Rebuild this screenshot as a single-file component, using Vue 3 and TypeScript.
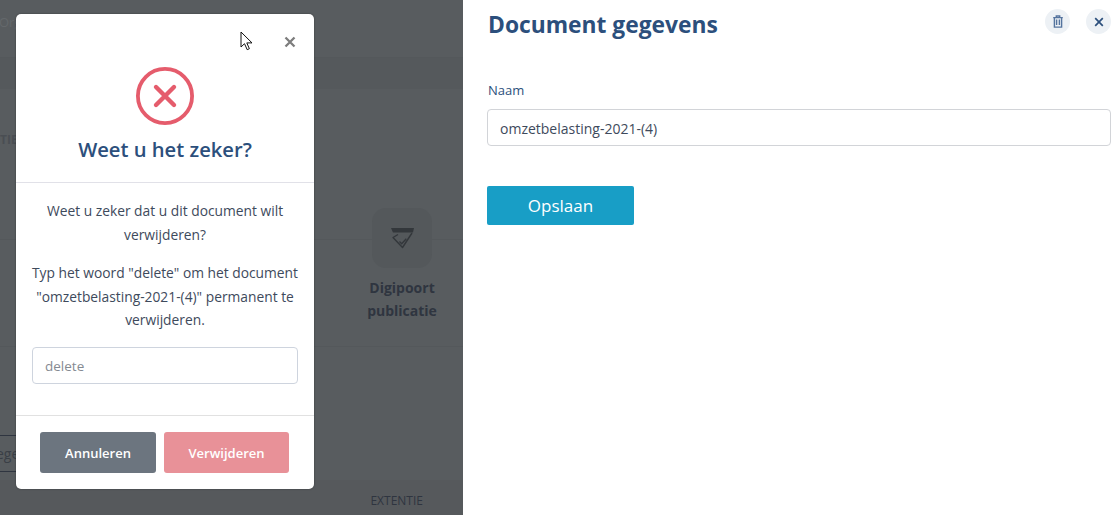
<script setup lang="ts">
const title = 'Weet u het zeker?'
</script>

<template>
  <div class="page">
    <section class="under">
      <div class="top"><span class="org">Org</span></div>
      <div class="band"></div>
      <div class="mid">
        <div class="tie">TIE</div>
        <div class="tile-row">
          <div class="tile">
            <div class="tile-icon">
              <svg width="26" height="26" viewBox="0 0 26 26" fill="none" stroke="#33373b" stroke-width="1.4">
                <path d="M2 3h23l-1 4.5H4z" fill="#33373b" stroke="none" />
                <path d="M9 9.5l-5 3 9.5 10L23 8" stroke-linejoin="round" />
                <path d="M10.5 16.5l2.2 2.2 4.6-5" />
              </svg>
            </div>
            <div class="tile-label">Digipoort<br />publicatie</div>
          </div>
        </div>
        <div class="lower">
          <div class="stub">ege</div>
        </div>
      </div>
      <div class="foot"><span>EXTENTIE</span></div>
    </section>

    <section class="panel">
      <header class="panel-head">
        <h1>Document gegevens</h1>
        <div class="round-buttons">
          <button class="round" aria-label="Verwijderen">
            <svg width="12" height="13" viewBox="0 0 12 13" fill="none" stroke="#55749e" stroke-width="1.4">
              <path d="M1.2 2.6h9.6M4.3 2.4V1h3.4v1.4M2.4 2.8v9.3h7.2V2.8" />
              <path d="M4.6 4.5v5.6M7.4 4.5v5.6" />
            </svg>
          </button>
          <button class="round" aria-label="Sluiten">
            <svg width="10" height="10" viewBox="0 0 10 10" fill="none" stroke="#2c4f7c" stroke-width="1.7">
              <path d="M1.2 1.2l7.6 7.6M8.8 1.2l-7.6 7.6" />
            </svg>
          </button>
        </div>
      </header>
      <label class="field-label" for="naam">Naam</label>
      <input id="naam" class="field" value="omzetbelasting-2021-(4)" />
      <button class="save">Opslaan</button>
    </section>

    <div class="modal">
      <div class="modal-top">
        <button class="modal-close" aria-label="Sluiten">
          <svg width="12" height="12" viewBox="0 0 12 12" fill="none" stroke="#7d7d7d" stroke-width="2.3">
            <path d="M1.5 1.5l9 9M10.5 1.5l-9 9" />
          </svg>
        </button>
        <svg class="err" width="60" height="60" viewBox="0 0 60 60" fill="none" stroke="#e55c6c">
          <circle cx="30" cy="30" r="27.1" stroke-width="3.8" />
          <path d="M21 21l18 18M39 21L21 39" stroke-width="4.4" stroke-linecap="round" />
        </svg>
        <h2>{{ title }}</h2>
      </div>
      <div class="modal-body">
        <p>Weet u zeker dat u dit document wilt verwijderen?</p>
        <p>Typ het woord "delete" om het document "omzetbelasting-2021-(4)" permanent te verwijderen.</p>
        <input class="confirm" placeholder="delete" />
      </div>
      <div class="modal-foot">
        <button class="btn cancel">Annuleren</button>
        <button class="btn remove">Verwijderen</button>
      </div>
    </div>

    <svg class="cursor" width="14" height="20" viewBox="0 0 14 20">
      <path d="M1 1v15l3.5-3.3 2.7 6 2.2-1-2.6-5.8H12z" fill="#fff" stroke="#111" stroke-width="1" />
    </svg>
  </div>
</template>

<style>
html, body { margin: 0; background: #fff; }
</style>

<style scoped>
.page {
  position: relative;
  width: 1116px;
  height: 515px;
  display: flex;
  overflow: hidden;
  font-family: "Open Sans", "Noto Sans", sans-serif;
  color: #3e4a5c;
}
.under {
  width: 463px;
  flex: none;
  display: flex;
  flex-direction: column;
  background: #585c5f;
  color: #2f3540;
}
.top {
  height: 57px;
  border-bottom: 1px solid #54585b;
  font-size: 13px;
  line-height: 44px;
  color: #64686b;
}
.org { display: block; text-indent: -1px; }
.band { height: 31px; background: #55595c; }
.mid { flex: 1; display: flex; flex-direction: column; }
.tie { font-size: 12px; line-height: 16px; margin-top: 43px; font-weight: 700; color: #4a4e53; }
.tile-row {
  margin-top: 4px;
  height: 195px;
  border-bottom: 1px solid #54585b;
  box-sizing: border-box;
  display: flex;
  justify-content: flex-end;
  padding: 56px 25px 0 0;
  background: linear-gradient(#54585b, #54585b) 0 87px / 100% 1px no-repeat;
}
.tile { width: 72px; text-align: center; }
.tile-icon {
  width: 60px;
  height: 60px;
  margin: 0 auto;
  border-radius: 14px;
  background: #54585b;
  display: flex;
  align-items: center;
  justify-content: center;
}
.tile-label {
  margin-top: 8px;
  font-size: 14px;
  line-height: 23px;
  font-weight: 700;
  color: #2f3540;
}
.lower { flex: 1; padding-top: 88px; }
.stub {
  width: 16px;
  height: 35px;
  border: 1px solid #2f3540;
  border-left: none;
  font-size: 14px;
  line-height: 35px;
  text-indent: -4px;
  overflow: hidden;
  color: #3a3f46;
}
.foot {
  height: 35px;
  background: #56595c;
  font-size: 12px;
  line-height: 42px;
  text-align: right;
  padding-right: 40px;
  color: #2f3540;
}

.panel {
  flex: 1;
  padding: 0 5px 0 24px;
  min-width: 0;
}
.panel-head { display: flex; justify-content: space-between; align-items: flex-start; height: 83px; }
h1 {
  margin: 10px 0 0 1px;
  font-size: 22.8px;
  line-height: 30px;
  font-weight: 700;
  color: #2c4f7c;
}
.round-buttons { display: flex; gap: 16px; margin-top: 9px; }
.round {
  width: 25px;
  height: 25px;
  border-radius: 50%;
  border: none;
  padding: 0;
  background: #edf1f5;
  display: flex;
  align-items: center;
  justify-content: center;
}
.field-label {
  display: block;
  margin-left: 1px;
  font-size: 13px;
  line-height: 14px;
  color: #2c4f7c;
}
.field {
  display: block;
  box-sizing: border-box;
  width: 624px;
  height: 37px;
  margin-top: 12px;
  padding: 1px 12px 0;
  border: 1px solid #d2d4d8;
  border-radius: 4px;
  font: 14px "Open Sans", "Noto Sans", sans-serif;
  color: #3e4a5c;
  outline: none;
}
.save {
  display: block;
  width: 147px;
  height: 39px;
  margin-top: 40px;
  border: none;
  border-radius: 2px;
  background: #189ec6;
  color: #fff;
  font: 17px "Open Sans", "Noto Sans", sans-serif;
}

.modal {
  position: absolute;
  left: 16px;
  top: 14px;
  width: 298px;
  height: 475px;
  background: #fff;
  border-radius: 5px;
  display: flex;
  flex-direction: column;
  box-shadow: 0 0 2px rgba(0, 0, 0, 0.4);
}
.modal-top {
  position: relative;
  height: 168px;
  border-bottom: 1px solid #e1e1e8;
  display: flex;
  flex-direction: column;
  align-items: center;
}
.modal-close {
  position: absolute;
  top: 22px;
  right: 18px;
  padding: 0;
  border: none;
  background: none;
  width: 12px;
  height: 12px;
  display: flex;
}
.err { margin-top: 52px; }
h2 {
  margin: 9px 0 0;
  font-size: 20.2px;
  line-height: 28px;
  font-weight: 600;
  color: #2c4f7c;
}
.modal-body {
  flex: 1;
  padding: 16px 16px 0;
  text-align: center;
  font-size: 13.8px;
  line-height: 23.5px;
  color: #3e4a5c;
}
.modal-body p { margin: 0 0 15px; }
.confirm {
  display: block;
  box-sizing: border-box;
  width: 266px;
  height: 37px;
  margin-top: 1px;
  padding: 1px 12px 0;
  border: 1px solid #ced4de;
  border-radius: 4px;
  font: 13.5px "Open Sans", "Noto Sans", sans-serif;
  outline: none;
}
.confirm::placeholder { color: #858a92; opacity: 1; }
.modal-foot {
  height: 74px;
  border-top: 1px solid #e1e1e1;
  display: flex;
  gap: 8px;
  padding: 16px 0 0 24px;
  box-sizing: border-box;
}
.btn {
  height: 41px;
  border: none;
  border-radius: 3px;
  color: #fff;
  font: 600 13px "Open Sans", "Noto Sans", sans-serif;
  padding: 0;
}
.cancel { width: 116px; background: #6c757f; }
.remove { width: 125px; background: #e89198; }
.cursor { position: absolute; left: 240px; top: 31px; }
</style>
